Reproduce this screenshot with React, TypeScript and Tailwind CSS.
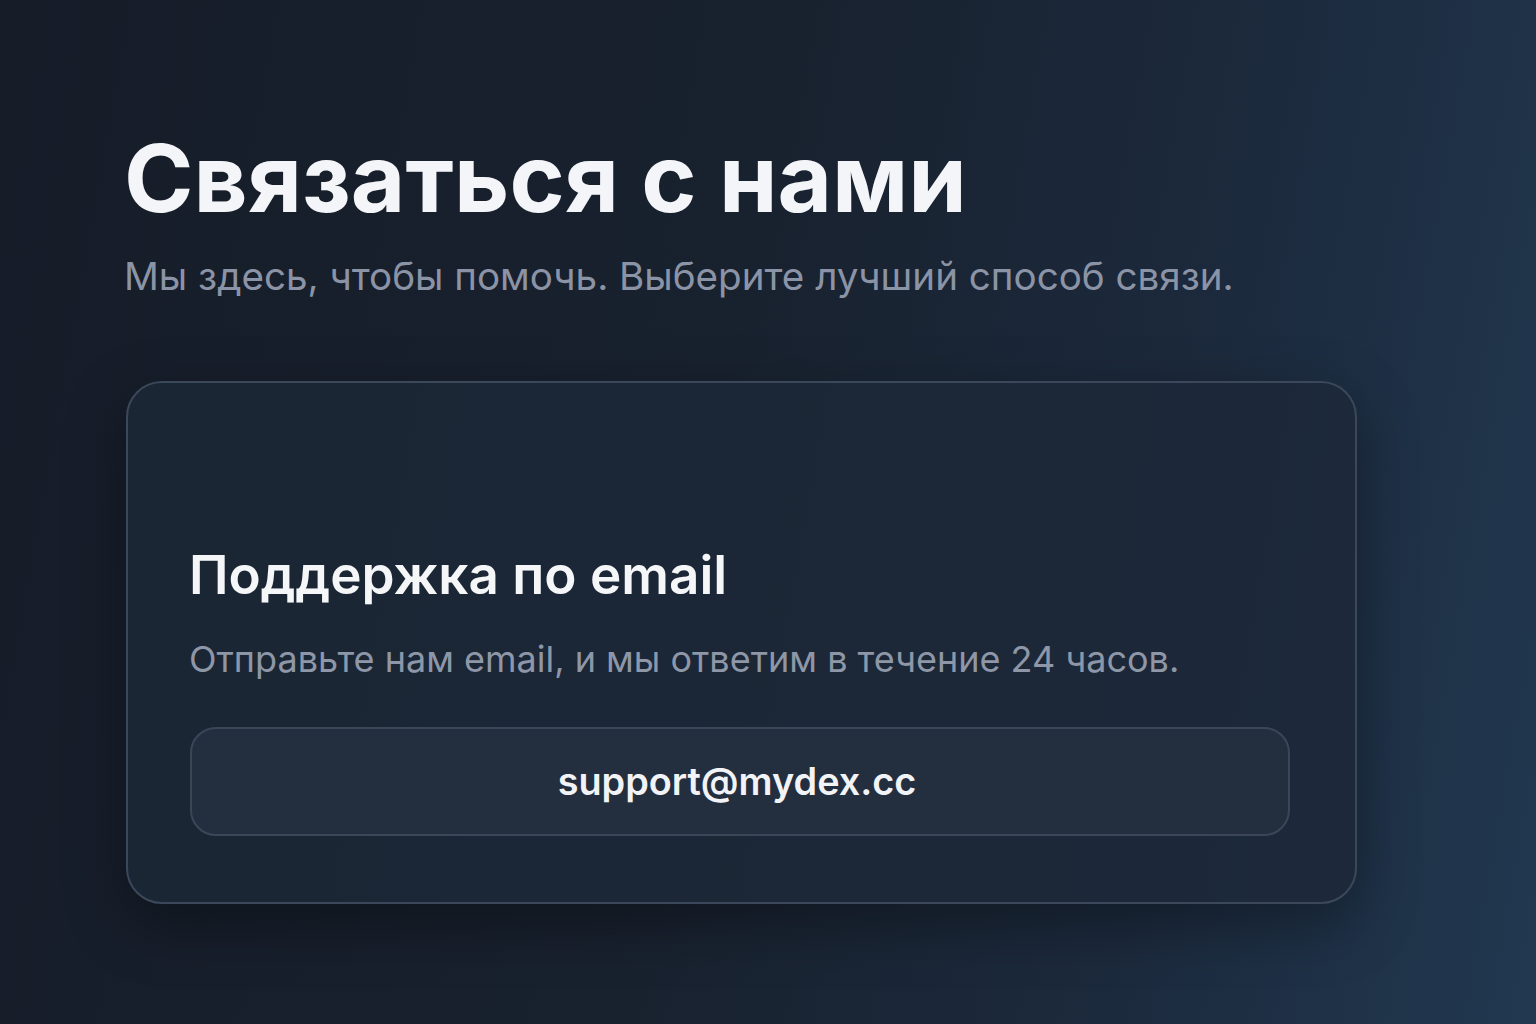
import React from "react";

export default function App() {
  return (
    <div
      className="w-[1536px] h-[1024px] overflow-hidden bg-[linear-gradient(100deg,#161d29_0%,#18212e_45%,#1c2a3d_75%,#213850_100%)]"
      style={{ fontFamily: "Inter, 'Noto Sans', sans-serif" }}
    >
      <div className="pl-[124px] pt-[123px]">
        <h1 className="text-[94px] leading-[110px] font-bold text-[#f4f5f8]">
          Связаться с нами
        </h1>
        <p className="mt-[20px] text-[38.6px] leading-[46px] text-[#8b94a6]">
          Мы здесь, чтобы помочь. Выберите лучший способ связи.
        </p>
        <div className="mt-[82px] w-[1231px] h-[523px] ml-[2px] rounded-[36px] border-[2px] border-[#3b475a] bg-[#1d2838]/80 shadow-[0_20px_60px_rgba(0,0,0,0.35)] flex flex-col justify-end pl-[61px] pr-[65px] pb-[66px]">
          <h2 className="text-[53px] leading-[64px] font-semibold text-[#f5f6f8]">
            Поддержка по email
          </h2>
          <p className="mt-[30px] text-[36px] leading-[44px] text-[#8e97a7]">
            Отправьте нам email, и мы ответим в течение 24 часов.
          </p>
          <div className="mt-[46px] ml-[1px] h-[109px] rounded-[26px] border-[2px] border-[#3b4659] bg-[#232e3f] flex items-center justify-center pr-[6px]">
            <span className="text-[37.8px] font-semibold text-[#f2f3f6]">support@mydex.cc</span>
          </div>
        </div>
      </div>
    </div>
  );
}
